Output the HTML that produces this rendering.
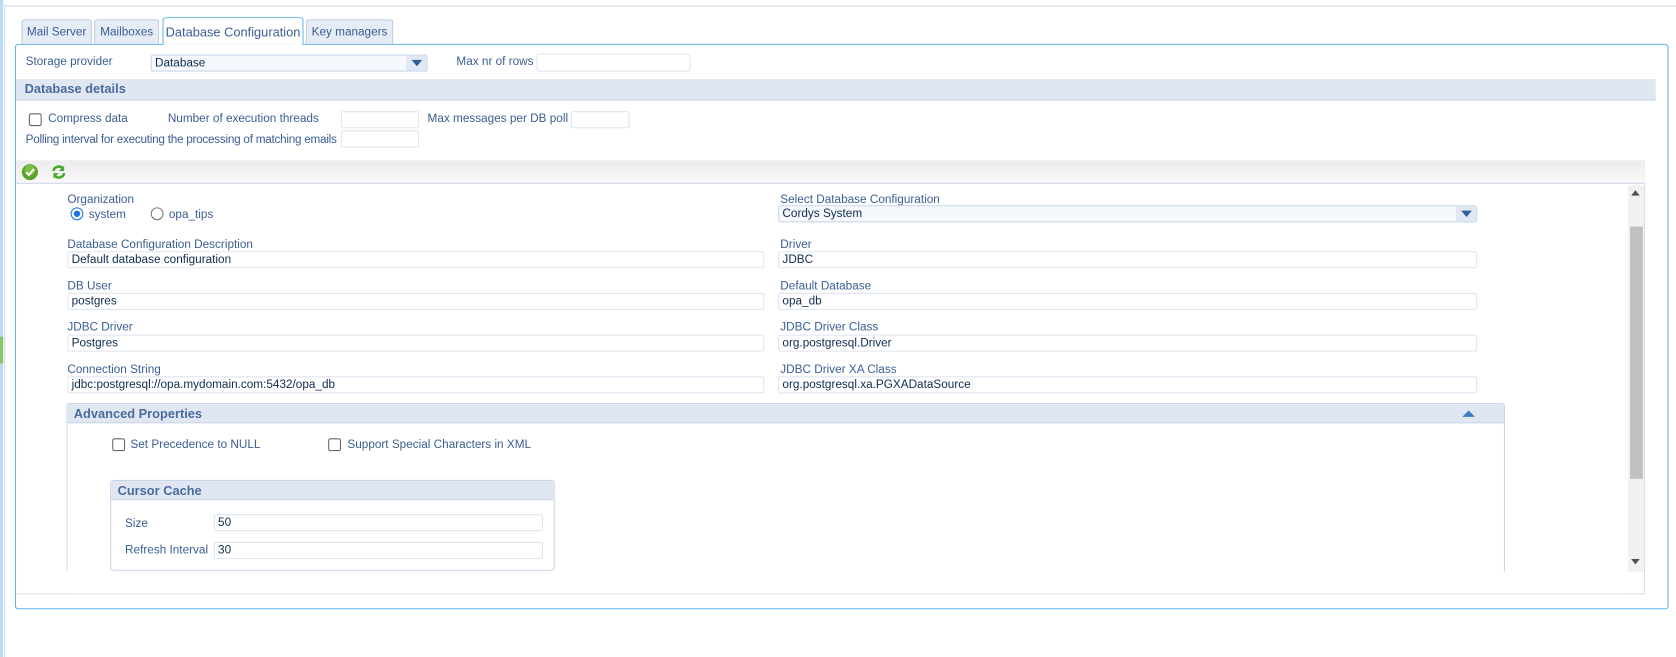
<!DOCTYPE html>
<html><head><meta charset="utf-8"><style>
*{box-sizing:border-box;margin:0;padding:0}
body{width:1676px;height:615px;background:#fff;position:relative;overflow:hidden;font-family:"Liberation Sans",sans-serif;font-size:11px;color:#3a5e93}
#w{position:absolute;left:0;top:0;width:1568px;height:576px;transform:scale(1.0689);transform-origin:0 0}
.a{position:absolute;white-space:nowrap}
.tab{position:absolute;top:18px;height:23px;border:1px solid #b9c9de;border-bottom:none;border-radius:3px 3px 0 0;background:#e6ecf5;color:#3a5e93;font-size:11px;text-align:center;line-height:22px}
.inp{position:absolute;height:16px;border:1px solid #dde5ef;border-radius:2px;background:#fff;color:#0e2c4e;font-size:11px;line-height:14px;padding-left:3px}
.cb{position:absolute;width:12px;height:12px;border:1px solid #666;border-radius:2px;background:#fff}
.hdr{position:absolute;background:#e0e7f3;border-bottom:1px solid #c9d6e8;color:#4a6b9c;font-weight:bold;font-size:12px;padding-left:6px;line-height:18px}
</style></head><body><div id="w">
<div class="a" style="left:0;top:0;width:3px;height:615px;background:#b7dcf7"></div>
<div class="a" style="left:0;top:315px;width:3px;height:25px;background:#8cc46a"></div>
<div class="a" style="left:4px;top:5px;width:1px;height:610px;background:#d5dbe3"></div>
<div class="a" style="left:4px;top:5px;width:1672px;height:1px;background:#d5dbe3"></div>

<div class="tab" style="left:20px;width:66px">Mail Server</div>
<div class="tab" style="left:88px;width:61px">Mailboxes</div>
<div class="tab" style="left:152px;width:132px;top:16px;height:26px;background:#fff;border-color:#5bb7ea;font-size:12px;line-height:26px;z-index:2">Database Configuration</div>
<div class="tab" style="left:286px;width:82px">Key managers</div>

<div class="a" style="left:14px;top:41px;width:1547px;height:529px;border:1px solid #5bb7ea;border-radius:3px"></div>
<div class="a" style="left:15px;top:172px;width:1524px;height:384px;border-right:1px solid #d8e0ea;border-bottom:1px solid #d8e0ea"></div>

<div class="a" style="left:24px;top:52px">Storage provider</div>
<div class="inp" style="left:141px;top:51px;width:259px;background:#f5f8fc;border-color:#c9d6e8">Database</div>
<div class="a" style="left:380px;top:52px;width:19px;height:14px;background:#e1e8f3"></div>
<div class="a" style="left:385px;top:56px;width:0;height:0;border-left:5px solid transparent;border-right:5px solid transparent;border-top:6px solid #2f5f9c"></div>
<div class="a" style="left:427px;top:52px">Max nr of rows</div>
<div class="inp" style="left:502px;top:50px;width:144px;height:17px"></div>

<div class="hdr" style="left:15px;top:74px;width:1534px;height:20px;padding-left:8px;line-height:19px">Database details</div>

<div class="cb" style="left:27px;top:106px"></div>
<div class="a" style="left:45px;top:105px">Compress data</div>
<div class="a" style="left:157px;top:105px">Number of execution threads</div>
<div class="inp" style="left:319px;top:104px;width:73px"></div>
<div class="a" style="left:400px;top:105px">Max messages per DB poll</div>
<div class="inp" style="left:534px;top:104px;width:55px"></div>
<div class="a" style="left:24px;top:125px;letter-spacing:-0.25px">Polling interval for executing the processing of matching emails</div>
<div class="inp" style="left:319px;top:122px;width:73px"></div>

<div class="a" style="left:15px;top:150px;width:1524px;height:22px;background:linear-gradient(#ececec,#f8f8f8);border-bottom:1px solid #cdd8e6"></div>
<svg class="a" style="left:20px;top:153px" width="16" height="16" viewBox="0 0 16 16"><circle cx="8" cy="8" r="7.5" fill="#5aa22a"/><circle cx="8" cy="6" r="5" fill="#8fd050" opacity=".6"/><path d="M4.5 8.2l2.5 2.5 4.8-5.5" stroke="#fff" stroke-width="2" fill="none"/></svg>
<svg class="a" style="left:48px;top:154px" width="14" height="14" viewBox="0 0 14 14"><path d="M2 6a5 5 0 0 1 9-2" stroke="#4aa82a" stroke-width="2.4" fill="none"/><path d="M12 1v5H7z" fill="#4aa82a"/><path d="M12 8a5 5 0 0 1-9 2" stroke="#4aa82a" stroke-width="2.4" fill="none"/><path d="M2 13V8h5z" fill="#4aa82a"/></svg>

<div class="a" style="left:1523px;top:173px;width:15px;height:362px;background:#f1f1f1"></div>
<div class="a" style="left:1525px;top:212px;width:12px;height:236px;background:#c1c1c1"></div>
<div class="a" style="left:1526px;top:178px;border-left:4px solid transparent;border-right:4px solid transparent;border-bottom:5px solid #505050"></div>
<div class="a" style="left:1526px;top:523px;border-left:4px solid transparent;border-right:4px solid transparent;border-top:5px solid #505050"></div>

<div class="a" style="left:63px;top:181px">Organization</div>
<div class="a" style="left:66px;top:194px;width:12px;height:12px;border:1px solid #1a73e8;border-radius:50%;background:#fff"></div>
<div class="a" style="left:69px;top:197px;width:6px;height:6px;border-radius:50%;background:#1a73e8"></div>
<div class="a" style="left:83px;top:195px">system</div>
<div class="a" style="left:141px;top:194px;width:12px;height:12px;border:1px solid #777;border-radius:50%;background:#fff"></div>
<div class="a" style="left:158px;top:195px">opa_tips</div>

<div class="a" style="left:63px;top:223px">Database Configuration Description</div>
<div class="inp" style="left:63px;top:235px;width:652px">Default database configuration</div>
<div class="a" style="left:63px;top:262px">DB User</div>
<div class="inp" style="left:63px;top:274px;width:652px">postgres</div>
<div class="a" style="left:63px;top:300px">JDBC Driver</div>
<div class="inp" style="left:63px;top:313px;width:652px">Postgres</div>
<div class="a" style="left:63px;top:340px">Connection String</div>
<div class="inp" style="left:63px;top:352px;width:652px">jdbc:postgresql://opa.mydomain.com:5432/opa_db</div>

<div class="a" style="left:730px;top:181px">Select Database Configuration</div>
<div class="inp" style="left:728px;top:192px;width:654px;background:#f5f8fc;border-color:#c9d6e8">Cordys System</div>
<div class="a" style="left:1362px;top:193px;width:19px;height:14px;background:#e1e8f3"></div>
<div class="a" style="left:1367px;top:197px;border-left:5px solid transparent;border-right:5px solid transparent;border-top:6px solid #2f5f9c"></div>
<div class="a" style="left:730px;top:223px">Driver</div>
<div class="inp" style="left:728px;top:235px;width:654px">JDBC</div>
<div class="a" style="left:730px;top:262px">Default Database</div>
<div class="inp" style="left:728px;top:274px;width:654px">opa_db</div>
<div class="a" style="left:730px;top:300px">JDBC Driver Class</div>
<div class="inp" style="left:728px;top:313px;width:654px">org.postgresql.Driver</div>
<div class="a" style="left:730px;top:340px">JDBC Driver XA Class</div>
<div class="inp" style="left:728px;top:352px;width:654px">org.postgresql.xa.PGXADataSource</div>

<div class="a" style="left:62px;top:377px;width:1346px;height:170px;border:1px solid #c9d6e8;border-bottom:none;border-radius:3px 3px 0 0"></div>
<div class="hdr" style="left:63px;top:378px;width:1344px;height:18px">Advanced Properties</div>
<div class="a" style="left:1368px;top:384px;border-left:6px solid transparent;border-right:6px solid transparent;border-bottom:6px solid #3f7cc4"></div>
<div class="a" style="left:62px;top:535px;width:1460px;height:20px;background:#fff"></div>
<div class="cb" style="left:105px;top:410px"></div>
<div class="a" style="left:122px;top:410px">Set Precedence to NULL</div>
<div class="cb" style="left:307px;top:410px"></div>
<div class="a" style="left:325px;top:410px">Support Special Characters in XML</div>

<div class="a" style="left:103px;top:449px;width:416px;height:85px;border:1px solid #c9d6e8;border-radius:3px"></div>
<div class="hdr" style="left:104px;top:450px;width:414px;height:18px">Cursor Cache</div>
<div class="a" style="left:117px;top:484px">Size</div>
<div class="inp" style="left:200px;top:481px;width:308px">50</div>
<div class="a" style="left:117px;top:509px">Refresh Interval</div>
<div class="inp" style="left:200px;top:507px;width:308px">30</div>
</div></body></html>
